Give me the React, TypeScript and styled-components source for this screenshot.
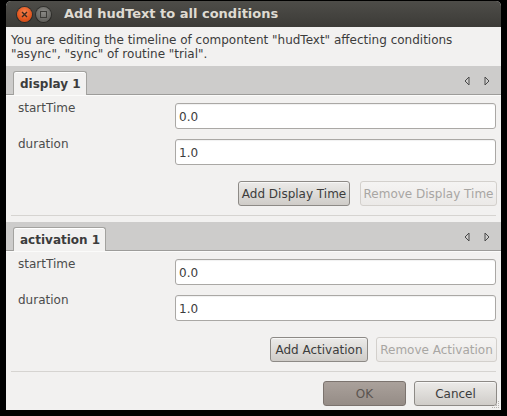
import React from "react";
import styled, { createGlobalStyle } from "styled-components";

const GlobalStyle = createGlobalStyle`
  html, body { margin: 0; padding: 0; background: #000; }
  body { font-family: "DejaVu Sans", "Liberation Sans", sans-serif; font-size: 12px; }
  * { box-sizing: border-box; }
`;

const Window = styled.div`
  margin: 1px 0 0 6px;
  width: 495px;
  height: 409px;
  display: flex;
  flex-direction: column;
  border-radius: 5px 5px 0 0;
  overflow: hidden;
  background: #f2f1f0;
  position: relative;
`;

const TitleBar = styled.div`
  height: 26px;
  flex: none;
  display: flex;
  align-items: center;
  padding-left: 11px;
  background: linear-gradient(#4e4d49, #3c3b37);
`;

const WinButton = styled.div<{ $kind: "close" | "min" }>`
  width: 15px;
  height: 15px;
  border-radius: 50%;
  margin-right: 4px;
  display: flex;
  align-items: center;
  justify-content: center;
  background: ${(p) =>
    p.$kind === "close"
      ? "radial-gradient(circle at 50% 35%, #f7834f, #e0551d 60%, #c64514)"
      : "radial-gradient(circle at 50% 35%, #8a8985, #6a6965 60%, #585753)"};
  box-shadow: 0 0 0 1px rgba(0, 0, 0, 0.35);
`;

const Title = styled.div`
  margin-left: 9px;
  color: #dfdbd2;
  font-weight: bold;
  font-size: 13px;
  line-height: 16px;
`;

const Description = styled.div`
  padding: 6px 5px 5px 5px;
  line-height: 14px;
  color: #3c3c3c;
  flex: none;
`;

const Section = styled.div`
  display: flex;
  flex-direction: column;
  flex: none;
`;

const TabBar = styled.div`
  height: 29px;
  display: flex;
  align-items: flex-end;
  background: #cdcccb;
  border-bottom: 1px solid #9d9c9a;
  padding-left: 7px;
`;

const Tab = styled.div`
  height: 24px;
  margin-bottom: -1px;
  padding: 0 5px 0 6px;
  display: flex;
  align-items: center;
  background: #f2f1f0;
  border: 1px solid #a3a29f;
  border-bottom: none;
  border-radius: 3px 3px 0 0;
  font-weight: bold;
  color: #3c3c3c;
  box-shadow: inset 0 1px 0 #ffffff;
`;

const Arrows = styled.div`
  margin-left: auto;
  align-self: center;
  display: flex;
  gap: 14px;
  padding-right: 11px;
  padding-top: 1px;
`;

const FormBody = styled.div`
  padding: 5px 5px 0 12px;
  display: flex;
  flex-direction: column;
  gap: 8px;
  border-top: 1px solid #fbfbfa;
`;

const Row = styled.div`
  display: grid;
  grid-template-columns: 157px 1fr;
  align-items: start;
`;

const Label = styled.div`
  line-height: 14px;
  color: #4c4c4c;
`;

const Input = styled.div`
  margin-top: 2px;
  height: 26px;
  border: 1px solid #aaa8a5;
  border-radius: 3px;
  background: #ffffff;
  box-shadow: inset 0 1px 1px rgba(0, 0, 0, 0.06);
  padding-left: 3px;
  display: flex;
  align-items: center;
  color: #3c3c3c;
  padding-top: 1px;
`;

const ButtonRow = styled.div<{ $top: number; $gap: number }>`
  display: flex;
  justify-content: flex-end;
  gap: ${(p) => p.$gap}px;
  padding-right: 4px;
  margin-top: ${(p) => p.$top}px;
`;

const Button = styled.div<{ $variant?: "normal" | "disabled" | "default"; $width: number }>`
  height: 25px;
  width: ${(p) => p.$width}px;
  display: flex;
  align-items: center;
  justify-content: center;
  border-radius: 3px;
  white-space: nowrap;
  ${(p) =>
    p.$variant === "disabled"
      ? `
    background: linear-gradient(#f5f4f3, #ebe9e7);
    border: 1px solid #d3d0cc;
    color: #a8a6a3;
  `
      : p.$variant === "default"
      ? `
    background: linear-gradient(#aaa19b, #958c86);
    border: 1px solid #7b736e;
    color: #5a5450;
  `
      : `
    background: linear-gradient(#ecebe9, #cfccc8);
    border: 1px solid #8d8a86;
    color: #3c3c3c;
    box-shadow: inset 0 1px 0 rgba(255,255,255,0.6);
  `}
`;

const Separator = styled.div<{ $top: number }>`
  height: 1px;
  margin: ${(p) => p.$top}px 5px 0 5px;
  background: #d6d4d1;
  flex: none;
`;

const SectionGap = styled.div`
  height: 6px;
  flex: none;
`;

const Footer = styled.div`
  display: flex;
  justify-content: flex-end;
  gap: 8px;
  padding: 9px 4px 5px 0;
`;

const Grip = styled.svg`
  position: absolute;
  right: 1px;
  bottom: 1px;
`;

const ArrowIcon = ({ dir }: { dir: "left" | "right" }) => (
  <svg width="6" height="10" viewBox="0 0 6 10">
    {dir === "left" ? (
      <path d="M5 1 L1 5 L5 9 Z" fill="none" stroke="#4a4a4a" strokeWidth="1" />
    ) : (
      <path d="M1 1 L5 5 L1 9 Z" fill="none" stroke="#4a4a4a" strokeWidth="1" />
    )}
  </svg>
);

type SectionProps = {
  tab: string;
  addLabel: string;
  removeLabel: string;
  addWidth: number;
  removeWidth: number;
  gap: number;
};

const TimeSection = ({ tab, addLabel, removeLabel, addWidth, removeWidth, gap }: SectionProps) => (
  <Section>
    <TabBar>
      <Tab>{tab}</Tab>
      <Arrows>
        <ArrowIcon dir="left" />
        <ArrowIcon dir="right" />
      </Arrows>
    </TabBar>
    <FormBody>
      <Row>
        <Label>startTime</Label>
        <Input>0.0</Input>
      </Row>
      <Row>
        <Label>duration</Label>
        <Input>1.0</Input>
      </Row>
    </FormBody>
    <ButtonRow $top={16} $gap={gap}>
      <Button $width={addWidth}>{addLabel}</Button>
      <Button $variant="disabled" $width={removeWidth}>{removeLabel}</Button>
    </ButtonRow>
    <Separator $top={9} />
  </Section>
);

export default function App() {
  return (
    <>
      <GlobalStyle />
      <Window>
        <TitleBar>
          <WinButton $kind="close">
            <svg width="7" height="7" viewBox="0 0 7 7">
              <path d="M1 1 L6 6 M6 1 L1 6" stroke="#3a2a20" strokeWidth="1.4" />
            </svg>
          </WinButton>
          <WinButton $kind="min">
            <svg width="7" height="7" viewBox="0 0 7 7">
              <rect x="0.5" y="0.5" width="6" height="6" fill="none" stroke="#3c3b37" strokeWidth="1" />
            </svg>
          </WinButton>
          <Title>Add hudText to all conditions</Title>
        </TitleBar>
        <Description>
          You are editing the timeline of compontent "hudText" affecting conditions
          <br />
          "async", "sync" of routine "trial".
        </Description>
        <TimeSection
          tab="display 1"
          addLabel="Add Display Time"
          removeLabel="Remove Display Time"
          addWidth={112}
          removeWidth={137}
          gap={10}
        />
        <SectionGap />
        <TimeSection
          tab="activation 1"
          addLabel="Add Activation"
          removeLabel="Remove Activation"
          addWidth={98}
          removeWidth={121}
          gap={8}
        />
        <Footer>
          <Button $variant="default" $width={83}>OK</Button>
          <Button $width={83}>Cancel</Button>
        </Footer>
        <Grip width="8" height="8" viewBox="0 0 8 8">
          {[
            [6, 0],
            [6, 2],
            [4, 2],
            [6, 4],
            [4, 4],
            [2, 4],
            [6, 6],
            [4, 6],
            [2, 6],
            [0, 6],
          ].map(([x, y], i) => (
            <rect key={i} x={x} y={y} width="1" height="1" fill="#b5b2ae" />
          ))}
        </Grip>
      </Window>
    </>
  );
}
